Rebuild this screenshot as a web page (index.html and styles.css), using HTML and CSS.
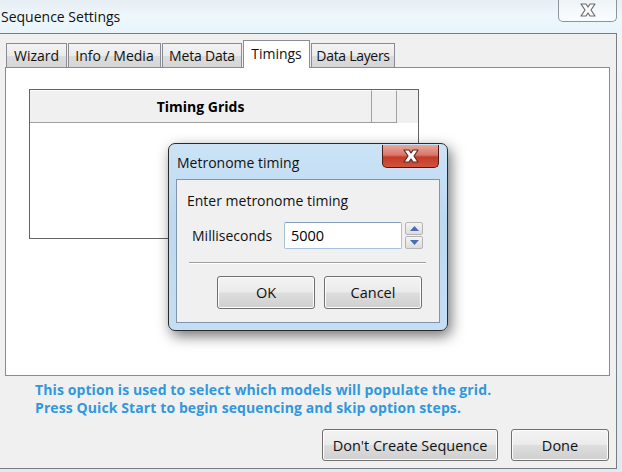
FILE: index.html
```html
<!DOCTYPE html>
<html>
<head>
<meta charset="utf-8">
<link rel="stylesheet" href="styles.css">
</head>
<body>
<div class="screen">
  <div class="titlebar">
    <span class="title">Sequence Settings</span>
    <div class="top-close">
      <svg width="22" height="16" viewBox="0 0 22 16"><path d="M4 2 L9 2 L11 5 L13 2 L18 2 L14 8 L18 14 L13 14 L11 11 L9 14 L4 14 L8 8 Z" fill="#fafafa" stroke="#6d6d6d" stroke-width="1.2" stroke-linejoin="round"/></svg>
    </div>
  </div>
  <div class="client">
    <div class="tabs">
      <div class="tab t-wizard">Wizard</div>
      <div class="tab t-info">Info / Media</div>
      <div class="tab t-meta">Meta Data</div>
      <div class="tab t-timings active">Timings</div>
      <div class="tab t-layers">Data Layers</div>
    </div>
    <div class="panel">
      <div class="grid">
        <div class="grid-head">
          <div class="col main">Timing Grids</div>
          <div class="col small"></div>
          <div class="col rest"></div>
        </div>
        <div class="grid-body"></div>
      </div>
    </div>
    <div class="hint">
      <p>This option is used to select which models will populate the grid.</p>
      <p>Press Quick Start to begin sequencing and skip option steps.</p>
    </div>
    <div class="actions">
      <button class="btn wide">Don't Create Sequence</button>
      <button class="btn done">Done</button>
    </div>
  </div>

  <div class="dialog">
    <div class="dlg-title">
      <span>Metronome timing</span>
      <div class="red-close">
        <svg width="22" height="16" viewBox="0 0 22 16"><path d="M4 2 L9 2 L11 5 L13 2 L18 2 L14 8 L18 14 L13 14 L11 11 L9 14 L4 14 L8 8 Z" fill="#ffffff" stroke="#5a2a22" stroke-width="1.2" stroke-linejoin="round"/></svg>
      </div>
    </div>
    <div class="dlg-body">
      <div class="prompt">Enter metronome timing</div>
      <div class="field-row">
        <label>Milliseconds</label>
        <div class="input">5000</div>
        <div class="spin">
          <div class="spin-btn"><svg width="9" height="5" viewBox="0 0 9 5"><path d="M0 5 L4.5 0 L9 5 Z" fill="#4a6cb0"/></svg></div>
          <div class="spin-btn"><svg width="9" height="5" viewBox="0 0 9 5"><path d="M0 0 L4.5 5 L9 0 Z" fill="#4a6cb0"/></svg></div>
        </div>
      </div>
      <div class="sep"></div>
      <div class="dlg-actions">
        <button class="btn dbtn">OK</button>
        <button class="btn dbtn">Cancel</button>
      </div>
    </div>
  </div>
</div>
</body>
</html>
```
FILE: styles.css
```css
* { box-sizing: border-box; }
html, body { margin: 0; padding: 0; }
body {
  width: 622px;
  height: 472px;
  overflow: hidden;
  font-family: "Open Sans", "Noto Sans", sans-serif;
  color: #000;
}
.screen {
  position: relative;
  width: 622px;
  height: 472px;
  background: linear-gradient(180deg, #eef6fb 0%, #e3f1f9 40%, #d9edf8 100%);
  display: flex;
  flex-direction: column;
}
.titlebar {
  height: 33px;
  display: flex;
  align-items: flex-start;
  background: linear-gradient(180deg, #e6eef3 0%, #eef7fb 50%, #e8f5fb 100%);
}
.title {
  font-size: 14px;
  line-height: 20px;
  margin: 7px 0 0 1px;
  color: #111;
}
.top-close {
  margin-left: auto;
  margin-right: 5px;
  margin-top: -1px;
  width: 59px;
  height: 23px;
  border: 1px solid #8b949c;
  border-top: none;
  border-radius: 0 0 5px 5px;
  background: linear-gradient(180deg, rgba(255,255,255,0.3), rgba(255,255,255,0.6));
  display: flex;
  align-items: center;
  justify-content: center;
}
.client {
  width: 617px;
  height: 436px;
  background: #f0f0f0;
  border-top: 1px solid #7c7c7c;
  border-right: 1px solid #7c7c7c;
  border-bottom: 1px solid #7c7c7c;
  display: flex;
  flex-direction: column;
}
.tabs {
  display: flex;
  align-items: flex-end;
  margin: 5px 0 0 6px;
  height: 28px;
  position: relative;
  z-index: 1;
}
.tab {
  height: 24px;
  margin-right: 1px;
  border: 1px solid #898c95;
  border-bottom: none;
  background: linear-gradient(180deg, #f3f3f3 0%, #ebebeb 50%, #dcdcdc 51%, #d6d6d6 100%);
  font-size: 14px;
  line-height: 23px;
  color: #111;
  text-align: center;
  white-space: nowrap;
}
.t-wizard { width: 61px; }
.t-info { width: 93px; }
.t-meta { width: 80px; letter-spacing: -0.2px; }
.t-timings { width: 67px; }
.t-layers { width: 84px; letter-spacing: -0.3px; }
.tab.active {
  height: 28px;
  margin-bottom: -1px;
  background: #ffffff;
  line-height: 25px;
}
.panel {
  margin-left: 5px;
  width: 605px;
  height: 309px;
  background: #fff;
  border: 1px solid #898c95;
  padding: 21px 0 0 23px;
}
.grid {
  width: 390px;
  height: 150px;
  border: 1px solid #646464;
  display: flex;
  flex-direction: column;
}
.grid-head {
  height: 33px;
  display: flex;
  background: #f0f0f0;
}
.col { height: 100%; }
.col.main {
  width: 342px;
  border-right: 1px solid #a0a0a0;
  border-bottom: 1px solid #a0a0a0;
  border-top: 1px solid #fcfcfc;
  font-weight: bold;
  font-size: 14px;
  display: flex;
  align-items: center;
  justify-content: center;
}
.col.small {
  width: 25px;
  border-right: 1px solid #a0a0a0;
  border-bottom: 1px solid #a0a0a0;
  border-top: 1px solid #fcfcfc;
}
.col.rest { flex: 1; background: #f0f0f0; }
.grid-body { flex: 1; background: #fff; }
.hint {
  margin: 5px 0 0 35px;
  color: #3198dc;
  font-weight: bold;
  font-size: 14px;
  line-height: 18px;
  letter-spacing: 0.1px;
}
.hint p { margin: 0; }
.actions {
  display: flex;
  justify-content: flex-end;
  gap: 13px;
  margin: 12px 7px 0 0;
}
.btn {
  font-family: "Open Sans", "Noto Sans", sans-serif;
  font-size: 14.5px;
  color: #111;
  border: 1px solid #707070;
  border-radius: 3px;
  background: linear-gradient(180deg, #f3f3f3 0%, #ebebeb 48%, #dddddd 52%, #cfcfcf 100%);
  box-shadow: inset 0 0 0 1px #fcfcfc;
  padding: 0;
  height: 32px;
}
.btn.wide { width: 176px; }
.btn.done { width: 98px; }

/* dialog */
.dialog {
  position: absolute;
  left: 168px;
  top: 143px;
  width: 280px;
  height: 188px;
  border: 1px solid #2a2a2a;
  border-radius: 7px;
  background: linear-gradient(180deg, #cce3f6 0%, #bcd9f2 40%, #c4def4 100%);
  box-shadow: 3px 5px 14px rgba(0,0,0,0.55);
  padding: 0 7px 7px 7px;
  display: flex;
  flex-direction: column;
}
.dlg-title {
  height: 35px;
  display: flex;
  align-items: flex-start;
  position: relative;
}
.dlg-title span {
  font-size: 14px;
  margin: 9px 0 0 1px;
  line-height: 20px;
  color: #111;
}
.red-close {
  margin-left: auto;
  margin-right: 1px;
  margin-top: 1px;
  width: 57px;
  height: 23px;
  border: 1px solid #4e1a12;
  border-top: none;
  border-radius: 0 0 5px 5px;
  background: linear-gradient(180deg, #e9a89c 0%, #d9776a 45%, #c43b28 55%, #d2533c 100%);
  display: flex;
  align-items: center;
  justify-content: center;
}
.dlg-body {
  flex: 1;
  background: #f0f0f0;
  border: 1px solid #8294ab;
  padding: 11px 0 0 10px;
  display: flex;
  flex-direction: column;
}
.prompt {
  font-size: 14px;
  line-height: 20px;
  color: #111;
}
.field-row {
  display: flex;
  align-items: center;
  margin-top: 11px;
  margin-left: 5px;
}
.field-row label {
  font-size: 14px;
  color: #111;
  width: 92px;
}
.input {
  width: 118px;
  height: 27px;
  border: 1px solid #a9c2dc;
  border-top-color: #7f9db9;
  border-radius: 2px;
  background: #fff;
  font-size: 14.5px;
  line-height: 25px;
  padding-left: 6px;
}
.spin {
  margin-left: 3px;
  width: 18px;
  height: 27px;
  display: flex;
  flex-direction: column;
  gap: 1px;
}
.spin-btn {
  flex: 1;
  border: 1px solid #b5b5b5;
  border-radius: 2px;
  background: linear-gradient(180deg, #f4f4f4, #dcdcdc);
  display: flex;
  align-items: center;
  justify-content: center;
}
.sep {
  margin: 13px 0 0 2px;
  width: 237px;
  height: 1px;
  background: #a0a0a0;
  box-shadow: 0 1px 0 #fff;
}
.dlg-actions {
  display: flex;
  gap: 9px;
  margin: 13px 0 0 30px;
}
.dbtn { width: 98px; height: 33px; }
```
